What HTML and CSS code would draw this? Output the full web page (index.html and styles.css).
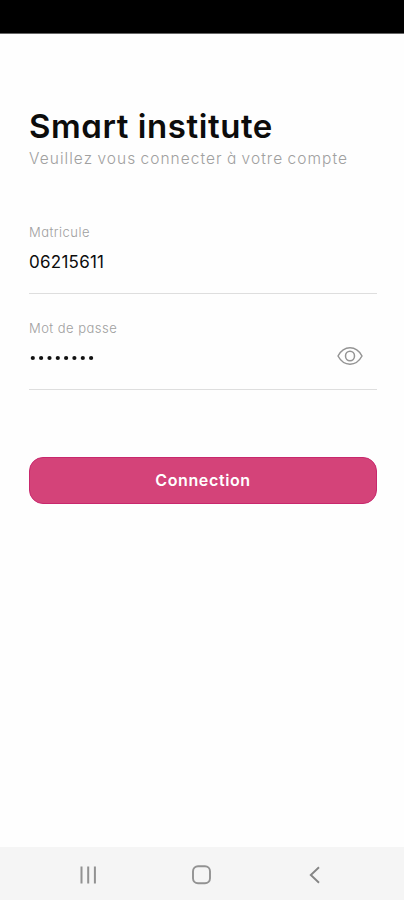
FILE: index.html
```html
<!DOCTYPE html>
<html lang="fr">
<head>
<meta charset="utf-8">
<title>Smart institute</title>
<link rel="stylesheet" href="styles.css">
</head>
<body>
<div class="status-bar"></div>
<main class="login">
  <h1 class="title"><span>Smart institute</span></h1>
  <p class="subtitle"><span>Veuillez vous connecter à votre compte</span></p>
  <form class="form">
    <div class="field">
      <div class="label"><span>Matricule</span></div>
      <div class="value"><span>06215611</span></div>
    </div>
    <div class="field">
      <div class="label"><span>Mot de passe</span></div>
      <div class="value">
        <svg class="dots" viewBox="0 0 70 8" width="70" height="8" fill="#111"><circle cx="3.8" cy="4" r="2.1"/><circle cx="12.1" cy="4" r="2.1"/><circle cx="20.5" cy="4" r="2.1"/><circle cx="28.8" cy="4" r="2.1"/><circle cx="37.1" cy="4" r="2.1"/><circle cx="45.4" cy="4" r="2.1"/><circle cx="53.8" cy="4" r="2.1"/><circle cx="62.1" cy="4" r="2.1"/></svg>
        <svg class="eye" viewBox="0 0 26 20" width="26" height="20" fill="none" stroke="#949494" stroke-width="1.5" stroke-linejoin="round"><path d="M1 10C4 4.500 8 1.800 13 1.800S22 4.500 25 10C22 15.500 18 18.200 13 18.200S4 15.500 1 10Z"/><ellipse cx="13" cy="10" rx="4.500" ry="4.800"/></svg>
      </div>
    </div>
    <button class="submit" type="button"><span>Connection</span></button>
  </form>
</main>
<nav class="nav-bar">
  <svg width="18" height="18" viewBox="0 0 18 18" fill="none" stroke="#929292" stroke-width="2"><path d="M2.500 .5v17M9.200 .5v17M15.900 .5v17"/></svg>
  <svg width="20" height="20" viewBox="0 0 20 20" fill="none" stroke="#929292" stroke-width="1.900"><rect x="1" y="1.200" width="17" height="17" rx="5"/></svg>
  <svg width="18" height="18" viewBox="0 0 18 18" fill="none" stroke="#858585" stroke-width="1.900"><path d="M13 1.300 4.800 9l8.200 7.700"/></svg>
</nav>
</body>
</html>
```
FILE: styles.css
```css
* { box-sizing: border-box; }
body {
  margin: 0;
  height: 900px;
  display: flex;
  flex-direction: column;
  background: #fefefe;
  color: #0c0c0c;
  font-family: Inter, "Liberation Sans", sans-serif;
  font-feature-settings: "cv11";
}
.status-bar { height: 34px; background: #000; border-bottom: 1px solid #666; }
.login { flex: 1; padding: 72px 27px 0 29px; }
.title { margin: 0; font-size: 33px; line-height: 40px; font-weight: 600; letter-spacing: .57px; white-space: nowrap; }
.subtitle { margin: 0; font-size: 15.5px; line-height: 26px; color: #a0a0a0; font-weight: 300; letter-spacing: 1.04px; word-spacing: -1.1px; white-space: nowrap; }
.form { margin-top: 47px; }
.field { height: 96px; padding-top: 2px; }
.label { height: 23px; font-size: 13px; line-height: 22px; color: #a0a0a0; font-weight: 300; letter-spacing: .47px; white-space: nowrap; }
.value {
  height: 50px;
  padding-bottom: 14px;
  display: flex;
  justify-content: space-between;
  align-items: center;
  border-bottom: 1px solid #dedede;
  font-size: 17px;
  letter-spacing: .25px;
}
.eye { margin: 0 14px 4px 0; }
.submit {
  width: 100%;
  height: 47px;
  margin-top: 46px;
  padding: 0 0 2px;
  border: 1px solid #c8286d;
  border-radius: 14px;
  background: #d44379;
  color: #fff;
  font: inherit;
  font-feature-settings: inherit;
  font-size: 16px;
  font-weight: 600;
  letter-spacing: .63px;
}
.nav-bar {
  height: 53px;
  padding: 2px 80px 0 79px;
  display: flex;
  justify-content: space-between;
  align-items: center;
  background: #f5f5f5;
}
```
